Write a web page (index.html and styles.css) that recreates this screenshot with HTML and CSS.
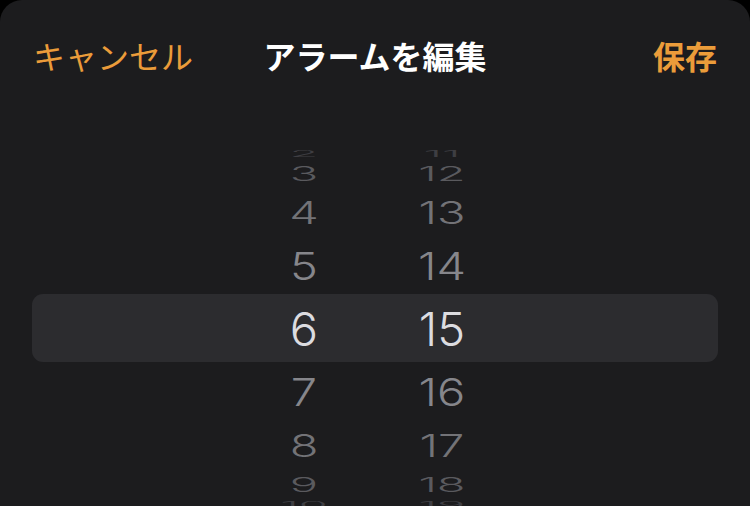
FILE: index.html
```html
<!DOCTYPE html>
<html lang="ja">
<head>
<meta charset="utf-8">
<title>アラームを編集</title>
<link rel="stylesheet" href="styles.css">
</head>
<body>
<div class="sheet">
  <header class="header">
    <span class="btn cancel">キャンセル</span>
    <span class="title">アラームを編集</span>
    <span class="btn save">保存</span>
  </header>
  <div class="picker">
    <div class="row r4u"><span class="cell h">2</span><span class="cell m">11</span></div>
    <div class="row r3u"><span class="cell h">3</span><span class="cell m">12</span></div>
    <div class="row r2u"><span class="cell h">4</span><span class="cell m">13</span></div>
    <div class="row r1u"><span class="cell h">5</span><span class="cell m">14</span></div>
    <div class="row sel"><span class="cell h">6</span><span class="cell m">15</span></div>
    <div class="row r1d"><span class="cell h">7</span><span class="cell m">16</span></div>
    <div class="row r2d"><span class="cell h">8</span><span class="cell m">17</span></div>
    <div class="row r3d"><span class="cell h">9</span><span class="cell m">18</span></div>
    <div class="row r4d"><span class="cell h">10</span><span class="cell m">19</span></div>
  </div>
</div>
</body>
</html>
```

FILE: styles.css
```css
html, body {
  margin: 0;
  padding: 0;
  background: #000;
  height: 100%;
  overflow: hidden;
}
.sheet {
  background: #1c1c1e;
  height: 506px;
  border-radius: 22px 22px 0 0;
  overflow: hidden;
  font-family: "Inter", "Noto Sans CJK JP", sans-serif;
}
.header {
  height: 110px;
  display: grid;
  grid-template-columns: 1fr auto 1fr;
  align-items: center;
  padding: 0 33px 0 33px;
  font-family: "Noto Sans CJK JP", sans-serif;
  font-size: 32px;
  line-height: 1;
}
.btn {
  color: #eb9c3a;
}
.cancel {
  justify-self: start;
  font-weight: 400;
}
.save {
  justify-self: end;
  font-weight: 700;
}
.title {
  color: #ffffff;
  font-weight: 700;
}
.picker {
  margin-top: 37px;
  height: 359px;
  overflow: hidden;
}
.row {
  display: flex;
  align-items: center;
  justify-content: flex-start;
  margin: 0 32px;
}
.cell {
  display: block;
  font-size: 47px;
  line-height: 1;
  text-align: center;
  font-weight: 300;
  color: #8e8e93;
}
.cell.h {
  width: 60px;
  margin-left: 242px;
}
.cell.m {
  width: 80px;
  margin-left: 68px;
}
.sel {
  height: 68px;
  background: #2c2c2f;
  border-radius: 11px;
}
.sel .cell {
  color: #dcdce0;
}
.r1u { height: 57px; }
.r1d { height: 58px; }
.r1u .cell, .r1d .cell {
  transform: scaleY(0.82);
  color: #86868b;
}
.r2u, .r2d { height: 50px; }
.r2u .cell, .r2d .cell {
  transform: scaleY(0.65);
  color: #737377;
}
.r3u, .r3d { height: 28px; }
.r3u .cell, .r3d .cell {
  transform: scaleY(0.42);
  color: #5a5a5e;
}
.r4u, .r4d { height: 12px; }
.r4u .cell, .r4d .cell {
  transform: scaleY(0.2);
  color: #3e3e42;
}
```
